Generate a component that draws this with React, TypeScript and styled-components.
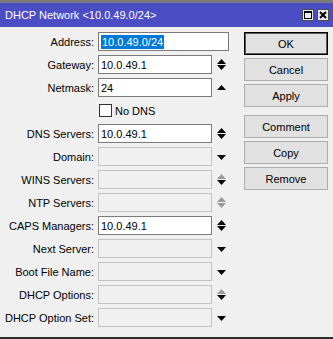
import React from "react";
import styled, { createGlobalStyle } from "styled-components";

const Global = createGlobalStyle`
  html, body { margin: 0; padding: 0; background: #f0f0f0; }
  body { font-family: "Liberation Sans", Arial, sans-serif; font-size: 11px; color: #000; }
  * { box-sizing: border-box; }
`;

const Window = styled.div`
  width: 333px;
  height: 339px;
  display: flex;
  flex-direction: column;
  background: #f0f0f0;
  overflow: hidden;
`;

const TopEdge = styled.div`
  height: 3px;
  background: #7c7c7c;
`;

const TitleBar = styled.div`
  height: 24px;
  background: #4a4dc4;
  display: flex;
  align-items: center;
  padding: 0 4px 0 5px;
  color: #fff;
  font-size: 11px;
`;

const TitleText = styled.div`
  flex: 1;
  white-space: nowrap;
`;

const TitleButtons = styled.div`
  display: flex;
  gap: 3px;
`;

const TitleButton = styled.div`
  width: 12px;
  height: 12px;
  background: #ececec;
  border: 1px solid #4b4b4b;
  display: flex;
  align-items: center;
  justify-content: center;
`;

const Body = styled.div`
  flex: 1;
  display: flex;
  padding-top: 5px;
  gap: 14px;
`;

const Form = styled.div`
  display: flex;
  flex-direction: column;
  gap: 4px;
  width: 230px;
`;

const Row = styled.div`
  display: flex;
  align-items: center;
  height: 19px;
`;

const Label = styled.div`
  width: 94px;
  margin-right: 4px;
  text-align: right;
  white-space: nowrap;
`;

const Field = styled.div<{ $enabled?: boolean; $wide?: boolean }>`
  width: ${(p) => (p.$wide ? "131px" : "114px")};
  height: 19px;
  background: ${(p) => (p.$enabled ? "#ffffff" : "#f0f0f0")};
  border: 1px solid ${(p) => (p.$enabled ? "#7a7a7a" : "#c2c2c2")};
  display: flex;
  align-items: center;
  padding-left: 2px;
  white-space: nowrap;
`;

const Selected = styled.span`
  background: #0078d7;
  color: #fff;
  padding: 1px 1px;
`;

const ArrowCell = styled.div`
  width: 18px;
  display: flex;
  align-items: center;
  justify-content: center;
`;

const CheckRow = styled.div`
  display: flex;
  align-items: center;
  height: 19px;
  padding-left: 99px;
  gap: 3px;
`;

const CheckBox = styled.div`
  width: 13px;
  height: 13px;
  background: #fff;
  border: 1px solid #333;
`;

const Buttons = styled.div`
  display: flex;
  flex-direction: column;
  width: 84px;
`;

const Button = styled.div<{ $default?: boolean; $gapBefore?: number }>`
  height: 23px;
  margin-top: ${(p) => p.$gapBefore ?? 3}px;
  background: #e1e1e1;
  border: 1px solid ${(p) => (p.$default ? "#000" : "#adadad")};
  box-shadow: ${(p) => (p.$default ? "inset 0 0 0 1px #5a5a5a" : "none")};
  display: flex;
  align-items: center;
  justify-content: center;
  font-size: 11px;
`;

const BottomEdge = styled.div`
  height: 2px;
  background: #2e2e2e;
`;

type ArrowKind = "both" | "up" | "down" | "greyUpDown" | "greyBoth";

const Arrow = ({ kind }: { kind: ArrowKind }) => {
  const black = "#000";
  const grey = "#9a9a9a";
  if (kind === "up")
    return (
      <svg width="9" height="5" viewBox="0 0 9 5">
        <polygon points="4.5,0 9,5 0,5" fill={black} />
      </svg>
    );
  if (kind === "down")
    return (
      <svg width="9" height="5" viewBox="0 0 9 5" style={{ marginTop: 2 }}>
        <polygon points="0,0 9,0 4.5,5" fill={black} />
      </svg>
    );
  const up = kind === "both" ? black : grey;
  const down = kind === "greyBoth" ? grey : black;
  return (
    <svg width="9" height="11" viewBox="0 0 9 11">
      <polygon points="4.5,0 9,5 0,5" fill={up} />
      <polygon points="0,6 9,6 4.5,11" fill={down} />
    </svg>
  );
};

type FieldDef = { label: string; value?: string; enabled?: boolean; arrow: ArrowKind };

const before: FieldDef[] = [
  { label: "Gateway:", value: "10.0.49.1", enabled: true, arrow: "both" },
  { label: "Netmask:", value: "24", enabled: true, arrow: "up" },
];

const after: FieldDef[] = [
  { label: "DNS Servers:", value: "10.0.49.1", enabled: true, arrow: "both" },
  { label: "Domain:", arrow: "down" },
  { label: "WINS Servers:", arrow: "greyUpDown" },
  { label: "NTP Servers:", arrow: "greyBoth" },
  { label: "CAPS Managers:", value: "10.0.49.1", enabled: true, arrow: "both" },
  { label: "Next Server:", arrow: "down" },
  { label: "Boot File Name:", arrow: "down" },
  { label: "DHCP Options:", arrow: "greyUpDown" },
  { label: "DHCP Option Set:", arrow: "down" },
];

const FieldRow = ({ f }: { f: FieldDef }) => (
  <Row>
    <Label>{f.label}</Label>
    <Field $enabled={f.enabled}>{f.value}</Field>
    <ArrowCell>
      <Arrow kind={f.arrow} />
    </ArrowCell>
  </Row>
);

export default function App() {
  return (
    <>
      <Global />
      <Window>
        <TopEdge />
        <TitleBar>
          <TitleText>DHCP Network &lt;10.0.49.0/24&gt;</TitleText>
          <TitleButtons>
            <TitleButton>
              <svg width="8" height="8" viewBox="0 0 8 8">
                <rect x="0.5" y="0.5" width="7" height="7" fill="none" stroke="#000" />
                <rect x="0" y="0" width="8" height="2" fill="#000" />
              </svg>
            </TitleButton>
            <TitleButton>
              <svg width="8" height="8" viewBox="0 0 8 8">
                <path d="M1 1 L7 7 M7 1 L1 7" stroke="#000" strokeWidth="2" />
              </svg>
            </TitleButton>
          </TitleButtons>
        </TitleBar>
        <Body>
          <Form>
            <Row>
              <Label>Address:</Label>
              <Field $enabled $wide>
                <Selected>10.0.49.0/24</Selected>
              </Field>
            </Row>
            {before.map((f) => (
              <FieldRow key={f.label} f={f} />
            ))}
            <CheckRow>
              <CheckBox />
              <span>No DNS</span>
            </CheckRow>
            {after.map((f) => (
              <FieldRow key={f.label} f={f} />
            ))}
          </Form>
          <Buttons>
            <Button $default $gapBefore={0}>OK</Button>
            <Button>Cancel</Button>
            <Button>Apply</Button>
            <Button $gapBefore={8}>Comment</Button>
            <Button>Copy</Button>
            <Button>Remove</Button>
          </Buttons>
        </Body>
        <BottomEdge />
      </Window>
    </>
  );
}
